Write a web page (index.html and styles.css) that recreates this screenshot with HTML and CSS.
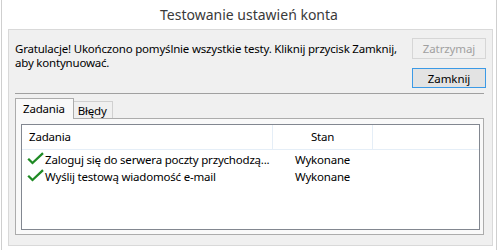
FILE: index.html
```html
<!DOCTYPE html>
<html lang="pl">
<head>
<meta charset="utf-8">
<link rel="stylesheet" href="styles.css">
</head>
<body>
<div class="window">
  <div class="title">Testowanie ustawień konta</div>
  <div class="panel">
    <div class="top">
      <p class="msg">Gratulacje! Ukończono pomyślnie wszystkie testy. Kliknij przycisk Zamknij, aby kontynuować.</p>
      <div class="buttons">
        <button class="btn disabled">Zatrzymaj</button>
        <button class="btn default">Zamknij</button>
      </div>
    </div>
    <div class="sep"></div>
    <div class="tabs">
      <div class="tab active">Zadania</div>
      <div class="tab">Błędy</div>
    </div>
    <div class="tabpanel">
      <div class="list">
        <div class="head">
          <div class="col c1">Zadania</div>
          <div class="col c2">Stan</div>
          <div class="col c3"></div>
        </div>
        <div class="row first">
          <div class="cell c1"><svg class="check" viewBox="0 0 17 13" width="17" height="13"><path d="M1.2 6.8 L5.5 11 L16 1.2" fill="none" stroke="#1f8a24" stroke-width="2.3"/></svg><span>Zaloguj się do serwera poczty przychodzą...</span></div>
          <div class="cell c2">Wykonane</div>
        </div>
        <div class="row">
          <div class="cell c1"><svg class="check" viewBox="0 0 17 13" width="17" height="13"><path d="M1.2 6.8 L5.5 11 L16 1.2" fill="none" stroke="#1f8a24" stroke-width="2.3"/></svg><span>Wyślij testową wiadomość e-mail</span></div>
          <div class="cell c2">Wykonane</div>
        </div>
      </div>
    </div>
  </div>
</div>
</body>
</html>
```

FILE: styles.css
```css
html, body {
  margin: 0;
  padding: 0;
  background: #ffffff;
}
body {
  width: 501px;
  height: 250px;
  overflow: hidden;
  font-family: "Noto Sans", "Open Sans", sans-serif;
  font-size: 11.5px;
  letter-spacing: -0.2px;
  color: #000;
}
.window {
  margin-left: 1px;
  width: 494px;
  height: 250px;
  border-left: 1px solid #cfcfcf;
  border-right: 1px solid #cfcfcf;
  display: flex;
  flex-direction: column;
}
.title {
  height: 29px;
  line-height: 29px;
  text-align: center;
  font-size: 14px;
  letter-spacing: 0;
  color: #3a3a3a;
}
.panel {
  box-sizing: border-box;
  margin-left: 6px;
  width: 485px;
  height: 217px;
  background: #f0f0f0;
  border: 1px solid #d9d9d9;
  padding: 0 6px 0 6px;
  display: flex;
  flex-direction: column;
}
.top {
  display: flex;
  justify-content: space-between;
  height: 63px;
}
.msg {
  margin: 12px 0 0 0;
  width: 385px;
  line-height: 14px;
}
.buttons {
  margin-top: 8px;
  display: flex;
  flex-direction: column;
  gap: 9px;
}
.btn {
  box-sizing: border-box;
  width: 74px;
  height: 21px;
  font-family: inherit;
  font-size: 11.5px;
  letter-spacing: -0.1px;
  padding: 0;
  background: #e1e1e1;
  border: 1px solid #adadad;
  color: #000;
}
.btn.disabled {
  background: #f0f0f0;
  border-color: #d6d6d6;
  color: #a0a0a0;
}
.btn.default {
  height: 20px;
  border-color: #3c9ae6;
  background: #e3e3e3;
}
.sep {
  height: 0;
  border-top: 1px solid #a0a0a0;
  width: 469px;
}
.tabs {
  display: flex;
  align-items: flex-end;
  margin-top: 4px;
  height: 20px;
}
.tab {
  box-sizing: border-box;
  height: 17px;
  padding: 0 5px 0 4px;
  border: 1px solid #d0d0d0;
  border-bottom: none;
  border-left: none;
  background: #f0f0f0;
  line-height: 17px;
}
.tab.active {
  position: relative;
  z-index: 1;
  height: 21px;
  margin-bottom: -1px;
  padding: 0 8px 0 7px;
  line-height: 19px;
  background: #f9f9f9;
  border: 1px solid #acacac;
  border-bottom: none;
}
.tabpanel {
  box-sizing: border-box;
  width: 469px;
  height: 117px;
  background: #f9f9f9;
  border: 1px solid #acacac;
  padding: 5px 3px 4px 5px;
}
.list {
  box-sizing: border-box;
  height: 106px;
  background: #fff;
  border: 1px solid #828790;
}
.head {
  display: flex;
  height: 25px;
  box-sizing: border-box;
  border-bottom: 1px solid #e5eef7;
}
.col {
  line-height: 24px;
  border-right: 1px solid #e5eef7;
  box-sizing: border-box;
}
.head .c1 {
  width: 251px;
  padding-left: 7px;
}
.head .c2 {
  width: 100px;
  text-align: center;
}
.head .c3 {
  flex: 1;
  border-right: none;
}
.row {
  display: flex;
  height: 17px;
  line-height: 17px;
}
.row.first {
  margin-top: 1px;
}
.cell.c1 {
  box-sizing: border-box;
  width: 251px;
  padding-left: 5px;
  display: flex;
  align-items: center;
  white-space: nowrap;
  overflow: hidden;
}
.check {
  flex: none;
  margin-right: 1px;
  margin-top: -3px;
}
.cell.c2 {
  width: 99px;
  text-align: center;
}
```
